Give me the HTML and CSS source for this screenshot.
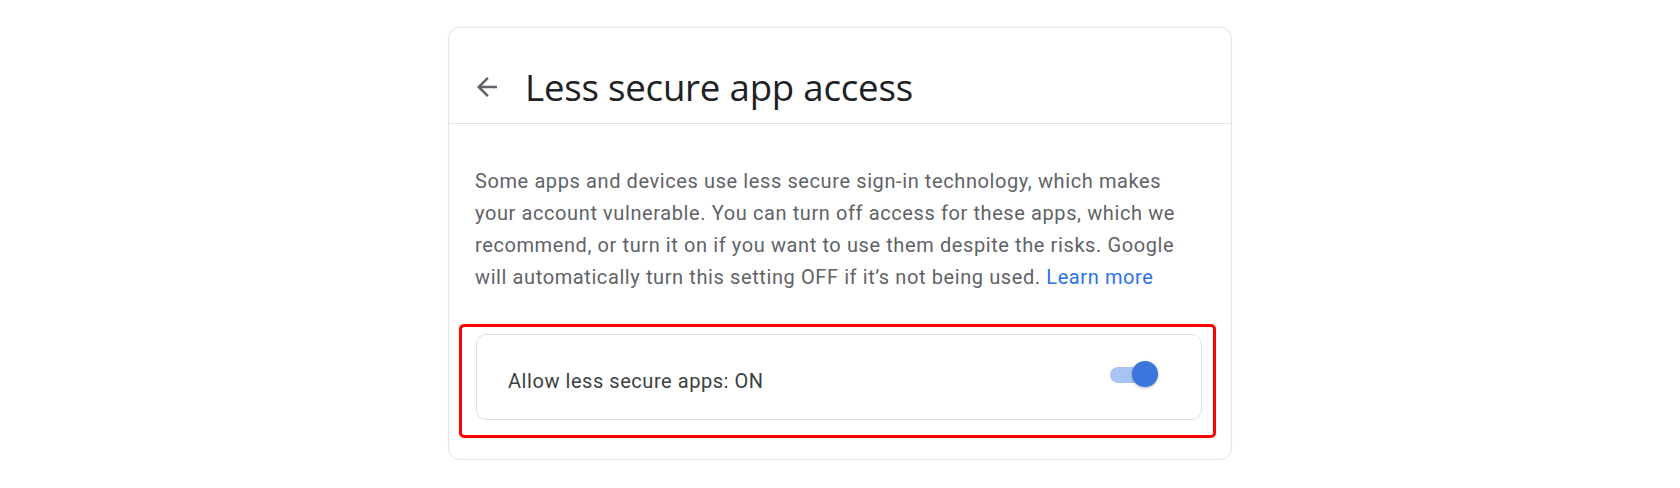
FILE: index.html
```html
<!DOCTYPE html>
<html lang="en">
<head>
<meta charset="utf-8">
<title>Less secure app access</title>
<link rel="stylesheet" href="styles.css">
</head>
<body>
<main class="card">
  <header class="card-header">
    <button class="back" aria-label="Back">
      <svg viewBox="0 0 24 24" width="30" height="30"><path d="M20 11H7.83l5.59-5.59L12 4l-8 8 8 8 1.41-1.41L7.83 13H20v-2z" fill="#5f6368"/></svg>
    </button>
    <h1 class="title">Less secure app access</h1>
  </header>
  <section class="card-body">
    <p class="desc">Some apps and devices use less secure sign-in technology, which makes your account vulnerable. You can turn off access for these apps, which we recommend, or turn it on if you want to use them despite the risks. Google will automatically turn this setting OFF if it’s not being used. <a href="#" class="link">Learn more</a></p>
    <div class="setting">
      <span class="setting-label">Allow less secure apps: ON</span>
      <span class="toggle"><span class="track"></span><span class="thumb"></span></span>
      <span class="highlight"></span>
    </div>
  </section>
</main>
</body>
</html>
```
FILE: styles.css
```css
html, body {
  margin: 0;
  padding: 0;
  background: #ffffff;
}
body {
  font-family: Roboto, "Liberation Sans", Arial, sans-serif;
}
.card {
  width: 782px;
  margin: 27px auto 0;
  border: 1px solid #e4e4e4;
  border-radius: 12px;
  box-shadow: 0 0 2px rgba(0,0,0,0.04);
  background: #fff;
}
.card-header {
  box-sizing: border-box;
  height: 96px;
  border-bottom: 1px solid #e2e2e2;
  display: flex;
  align-items: center;
  padding: 22px 0 0 23px;
}
.back {
  border: 0;
  background: none;
  padding: 0;
  margin: 0 23px 0 0;
  width: 30px;
  height: 30px;
  display: flex;
}
.title {
  margin: 0;
  font-family: "Open Sans", Roboto, sans-serif;
  font-weight: 400;
  font-size: 36.6px;
  color: #202124;
  letter-spacing: -0.2px;
}
.card-body {
  padding: 41px 29px 39px 26px;
}
.desc {
  margin: 0 0 41px;
  font-size: 20px;
  line-height: 32px;
  letter-spacing: 0.6px;
  color: #5f6368;
  max-width: 720px;
}
.link {
  color: #2b72e6;
  text-decoration: none;
}
.setting {
  position: relative;
  height: 86px;
  border: 1px solid #e0e0e0;
  border-radius: 10px;
  display: flex;
  align-items: center;
  justify-content: space-between;
  padding: 8px 43px 0 31px;
  box-sizing: border-box;
  margin-left: 1px;
}
.setting-label {
  font-size: 20px;
  letter-spacing: 0.55px;
  color: #3c4043;
}
.toggle {
  position: relative;
  width: 48px;
  height: 27px;
  display: block;
  margin-top: -13px;
}
.track {
  position: absolute;
  left: 0;
  top: 6px;
  width: 42px;
  height: 16px;
  border-radius: 8px;
  background: #a8c4f5;
}
.thumb {
  position: absolute;
  right: 0;
  top: 0;
  width: 26px;
  height: 26px;
  border-radius: 50%;
  background: #3b76dc;
  box-shadow: 0 1px 3px rgba(0,0,0,0.3);
}
.highlight {
  position: absolute;
  left: -18px;
  top: -11px;
  right: -15px;
  bottom: -19px;
  border: 3px solid #ff0000;
  border-radius: 5px;
  pointer-events: none;
}
```
